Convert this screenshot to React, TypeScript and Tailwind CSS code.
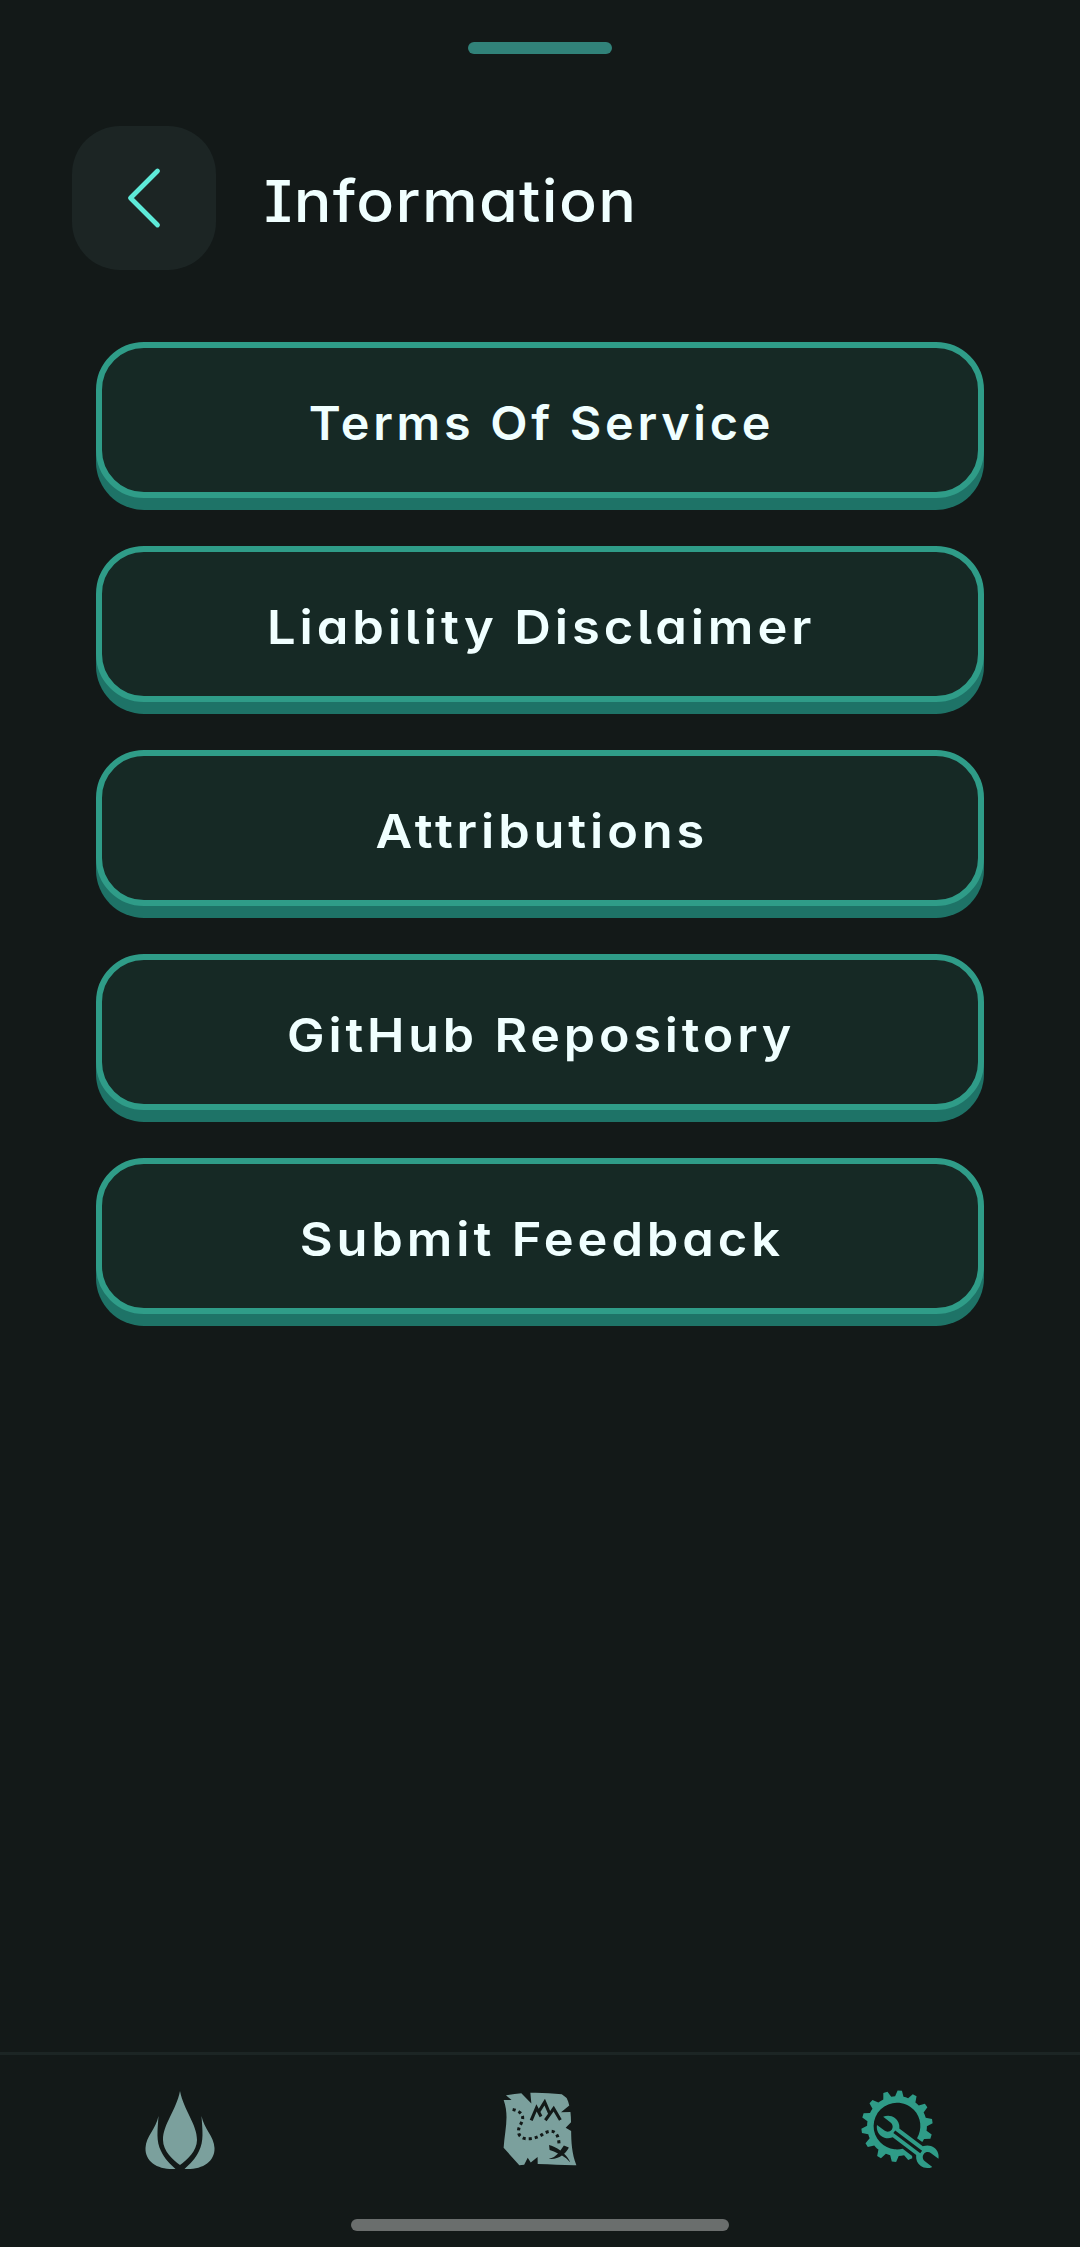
import { GiAutoRepair, GiTreasureMap } from "react-icons/gi";

const links = [
  { label: "Terms Of Service", stretch: "scale-x-[1.032]" },
  { label: "Liability Disclaimer", stretch: "scale-x-[1.079]" },
  { label: "Attributions", stretch: "scale-x-[1.075]" },
  { label: "GitHub Repository", stretch: "scale-x-[1.067]" },
  { label: "Submit Feedback", stretch: "scale-x-[1.077]" },
];

function FlameIcon() {
  return (
    <svg viewBox="0 0 84 84" className="size-[84px]" fill="currentColor">
      <path d="M42 4C46 24 59 37 59 53C59 64 49 73 42 78C35 73 25 64 25 53C25 37 38 24 42 4Z" />
      <path d="M20.500 29C19.500 44 18 54 23 64C26 71 32 77 37.500 82C20 83 7 75 7.500 61C8 49 18 42 20.500 29Z" />
      <path d="M63.500 29C64.500 44 66 54 61 64C58 71 52 77 46.500 82C64 83 77 75 76.500 61C76 49 66 42 63.500 29Z" />
    </svg>
  );
}

export default function App() {
  return (
    <div className="flex h-[2247px] w-[1080px] flex-col overflow-hidden bg-[#131918] font-[Inter,sans-serif] text-[#f0ffff] [font-feature-settings:'cv05','cv08','cv11']">
      <div className="mx-auto mt-[42px] h-3 w-36 shrink-0 rounded-full bg-[#318279]" />

      <header className="mt-[72px] flex h-36 shrink-0 items-center px-[72px]">
        <button aria-label="Back" className="flex size-36 items-center justify-center rounded-[48px] bg-[#1c2524]">
          <svg viewBox="0 0 144 144" className="size-36" fill="none" stroke="#5eead9" strokeWidth="4.8" strokeLinecap="round" strokeLinejoin="round">
            <path d="M85.500 45L58.500 72L85.500 99" />
          </svg>
        </button>
        <h1 className="ml-12 origin-left scale-x-[1.083] pt-[6px] text-[58px] leading-[72px] font-medium tracking-[1.2px]">Information</h1>
      </header>

      <main className="flex flex-1 flex-col gap-12 px-24 pt-[72px]">
        {links.map(({ label, stretch }) => (
          <button
            key={label}
            className="flex h-[156px] shrink-0 items-center justify-center rounded-[48px] border-[6px] border-[#2f9c88] bg-[#162925] pt-[6px] pl-[3px] shadow-[0_12px_0_#1e7367]"
          >
            <span className={`text-[47px] font-semibold tracking-[3.6px] whitespace-nowrap ${stretch}`}>{label}</span>
          </button>
        ))}
      </main>

      <nav className="flex h-[195px] shrink-0 flex-col border-t-[3px] border-[#1c2524]">
        <div className="grid h-[147px] grid-cols-3 place-items-center text-[#7ba09d]">
          <FlameIcon />
          <GiTreasureMap className="size-[84px]" />
          <GiAutoRepair className="size-[84px] text-[#2f9c88]" />
        </div>
        <div className="mx-auto mt-[17px] h-3 w-[378px] rounded-full bg-[#6a6e6d]" />
      </nav>
    </div>
  );
}
